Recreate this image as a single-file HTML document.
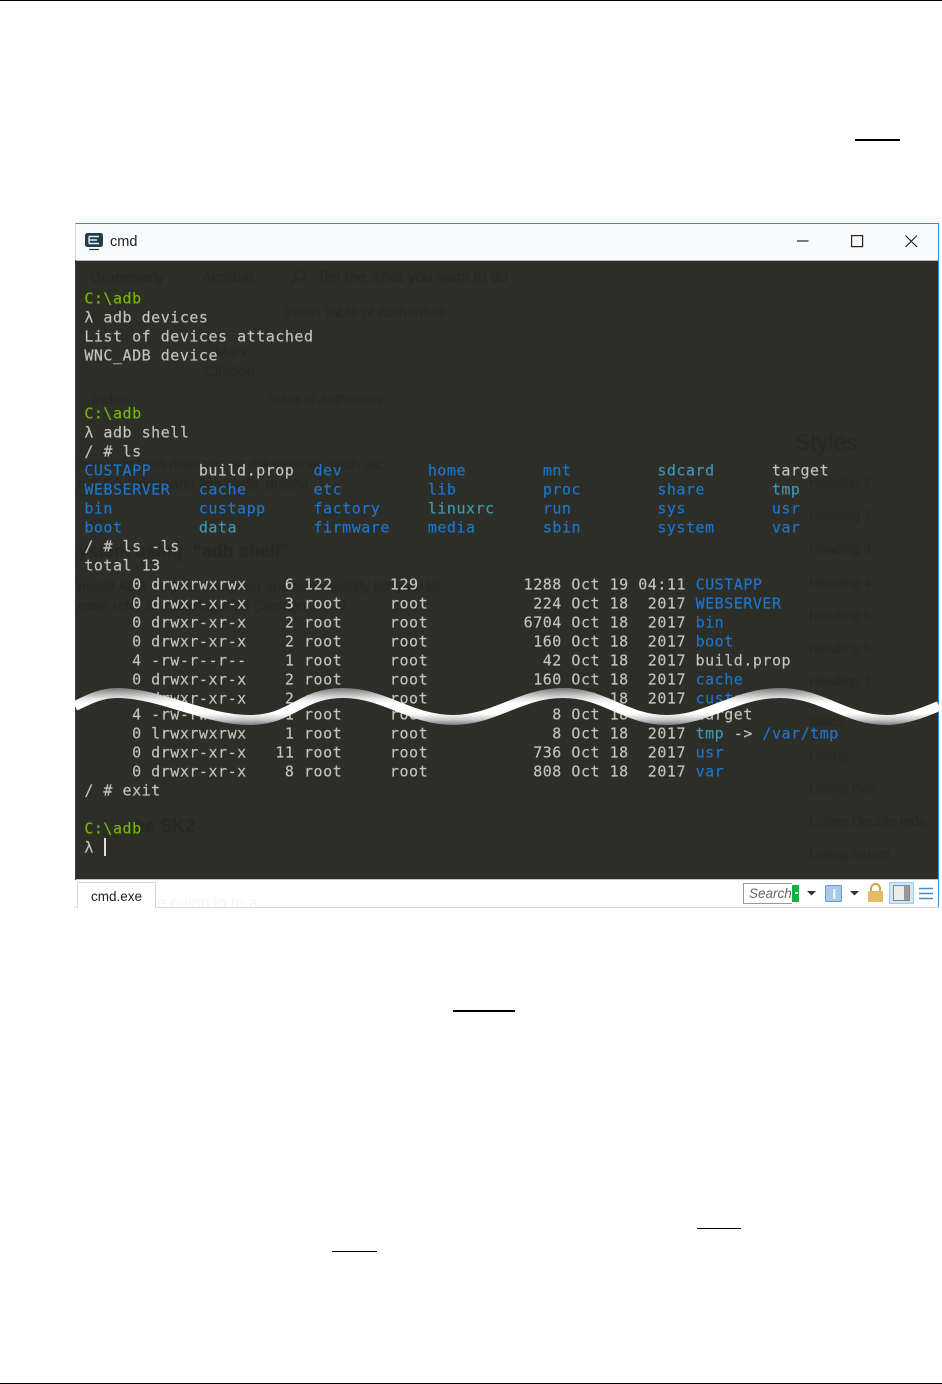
<!DOCTYPE html>
<html><head><meta charset="utf-8">
<style>
html,body{margin:0;padding:0;background:#fff}
#p{position:relative;width:942px;height:1384px;overflow:hidden;background:#fff}
.b{position:absolute;background:#000}
#win{position:absolute;left:75px;top:223px;width:864px;height:685px;background:#fff}
#title{position:absolute;left:0;top:0;width:864px;height:37px;background:#f9fafc;border-top:1px solid #3d8ccc;box-sizing:border-box;border-left:1px solid #cfdce8}
#term{position:absolute;left:0;top:37px;width:864px;height:620px;background:#2e2e28;border-top:1px solid #b8b8b8;box-sizing:border-box;overflow:hidden}
.layer{position:absolute;left:0;top:0;width:942px;height:1384px;filter:blur(.3px)}
.t{position:absolute;margin:0 0 0 -.2px;transform:translateY(.5px);font:15px/19px "DejaVu Sans Mono","Liberation Mono",monospace;letter-spacing:.52px;white-space:pre;color:#c4c4bc;-webkit-text-stroke:.15px currentColor}
.g{color:#76b900}.u{color:#1b77d0}.c{color:#4098b4}
.gh{position:absolute;font-family:"Liberation Sans",sans-serif;font-size:15px;line-height:16px;color:#272721;white-space:pre}
.h{font-size:13.6px}
</style></head><body><div id="p">
<div class="b" style="left:0;top:0;width:942px;height:1px"></div>
<div class="b" style="left:0;top:1383px;width:942px;height:1px"></div>
<div class="b" style="left:855px;top:139px;width:45px;height:2px"></div>
<div class="b" style="left:453px;top:1010px;width:62px;height:2px"></div>
<div class="b" style="left:697px;top:1228px;width:44px;height:1px"></div>
<div class="b" style="left:332px;top:1251px;width:45px;height:1px"></div>

<div id="win">
<div id="title"></div>
<div id="term"></div>
<div style="position:absolute;left:0;top:656px;width:864px;height:28px;background:#fff;border-top:1px solid #c4c4c4;box-sizing:border-box"></div>
<div style="position:absolute;left:0;top:684px;width:864px;height:1px;background:#d8d8d8"></div>
<div style="position:absolute;left:863px;top:0;width:1px;height:684px;background:#3d8ccc"></div>
<div style="position:absolute;left:0;top:37px;width:1px;height:620px;background:#3d3d38"></div>
</div>

<!-- title bar -->
<svg style="position:absolute;left:84px;top:232px" width="22" height="20" viewBox="0 0 22 20">
<rect x="1" y="1" width="18" height="14" rx="2.5" fill="#1d3f4a"/>
<path d="M5 4.5h10M5 8h8M5 11.5h10M5 4.5v7" stroke="#e8eef0" stroke-width="1.4" fill="none"/>
<path d="M5 17.5h10" stroke="#1d3f4a" stroke-width="1.2"/>
</svg>
<div style="position:absolute;left:110px;top:234px;font:14.5px/17px 'Liberation Sans',sans-serif;color:#222">cmd</div>
<svg style="position:absolute;left:790px;top:230px" width="135" height="22" viewBox="0 0 135 22" fill="none" stroke="#222" stroke-width="1.2">
<path d="M7 11h11.5"/>
<rect x="61.6" y="5.6" width="11" height="11"/>
<path d="M115.5 5.5l11.5 11.5M127 5.5l-11.5 11.5"/>
</svg>

<!-- ghost document -->
<div class="layer" style="filter:blur(.4px)">
<span class="gh" style="left:90px;top:270px">Grammarly</span>
<span class="gh" style="left:202px;top:270px">Acrobat</span>
<svg style="position:absolute;left:289px;top:268px" width="18" height="18" fill="none" stroke="#272721" stroke-width="1.4"><circle cx="11" cy="7" r="5"/><path d="M7 11l-5 5"/></svg>
<span class="gh" style="left:317px;top:270px;font-size:15.5px">Tell me what you want to do</span>
<span class="gh" style="left:284px;top:305px;font-size:14.4px">Insert Table of Authorities</span>
<span class="gh" style="left:215px;top:345px">Mark</span>
<span class="gh" style="left:204px;top:364px">Citation</span>
<span class="gh" style="left:92px;top:392px">Index</span>
<span class="gh" style="left:268px;top:392px;font-size:13.6px">Table of Authorities</span>
<span class="gh" style="left:795px;top:429px;font-size:23px;line-height:26px">Styles</span>
<span class="gh h" style="left:809px;top:475px">Heading 1</span>
<span class="gh h" style="left:809px;top:508px">Heading 2</span>
<span class="gh h" style="left:809px;top:541px">Heading 3</span>
<span class="gh h" style="left:809px;top:575px">Heading 4</span>
<span class="gh h" style="left:809px;top:608px">Heading 5</span>
<span class="gh h" style="left:809px;top:641px">Heading 6</span>
<span class="gh h" style="left:809px;top:674px">Heading 7</span>
<span class="gh h" style="left:809px;top:714px">Italics</span>
<span class="gh h" style="left:809px;top:748px">Listing</span>
<span class="gh h" style="left:809px;top:781px">Listing Box</span>
<span class="gh h" style="left:809px;top:814px">Listing Double-Inde</span>
<span class="gh h" style="left:809px;top:847px">Listing Indent</span>
<span class="gh" style="left:78px;top:457px;font-size:14.5px">manuals from manuals on the internet, such as:</span>
<span class="gh" style="left:78px;top:477px;font-size:14.5px">n 2.4.3 (command line / adb, droidvi</span>
<span class="gh" style="left:78px;top:542px;font-size:18px;font-weight:bold;line-height:18px">ystem using  “adb shell”</span>
<span class="gh" style="left:78px;top:579px;font-size:14.2px">Install ADB on your computer and successfully list your kit</span>
<span class="gh" style="left:78px;top:598px;font-size:14.2px">ease refer to Installing ADB (Section 2.4.3)</span>
<span class="gh" style="left:128px;top:817px;font-size:18px;font-weight:bold;line-height:18px">the SK2</span>
</div>
<span class="gh" style="left:150px;top:896px;font-size:16px;color:#f6f6f6;clip-path:inset(0 0 5px 0)">ile going in to a</span>

<!-- terminal upper -->
<div class="layer" style="clip-path:path('M75 260L939 260L939 706C925 712 905 720 887 720C845 720 822 693 780 693C735 693 708 720 667 720C625 720 605 693 563 693C520 693 495 720 453 720C410 720 385 693 343 693C300 693 292 720 250 720C205 720 160 693 117 693C100 693 88 700 75 706Z')">
<div class="t g" style="left:84.5px;top:289px">C:\adb</div>
<div class="t" style="left:84.5px;top:308px">λ adb devices</div>
<div class="t" style="left:84.5px;top:327px">List of devices attached</div>
<div class="t" style="left:84.5px;top:346px">WNC_ADB device</div>
<div class="t g" style="left:84.5px;top:404px">C:\adb</div>
<div class="t" style="left:84.5px;top:423px">λ adb shell</div>
<div class="t" style="left:84.5px;top:442px">/ # ls</div>
<div class="t u" style="left:84.5px;top:461px">CUSTAPP</div><div class="t" style="left:199px;top:461px">build.prop</div><div class="t u" style="left:313.7px;top:461px">dev</div><div class="t u" style="left:428px;top:461px">home</div><div class="t u" style="left:543px;top:461px">mnt</div><div class="t c" style="left:657.5px;top:461px">sdcard</div><div class="t" style="left:772px;top:461px">target</div>
<div class="t u" style="left:84.5px;top:480px">WEBSERVER</div><div class="t u" style="left:199px;top:480px">cache</div><div class="t u" style="left:313.7px;top:480px">etc</div><div class="t u" style="left:428px;top:480px">lib</div><div class="t u" style="left:543px;top:480px">proc</div><div class="t u" style="left:657.5px;top:480px">share</div><div class="t c" style="left:772px;top:480px">tmp</div>
<div class="t u" style="left:84.5px;top:499px">bin</div><div class="t u" style="left:199px;top:499px">custapp</div><div class="t u" style="left:313.7px;top:499px">factory</div><div class="t c" style="left:428px;top:499px">linuxrc</div><div class="t u" style="left:543px;top:499px">run</div><div class="t u" style="left:657.5px;top:499px">sys</div><div class="t u" style="left:772px;top:499px">usr</div>
<div class="t u" style="left:84.5px;top:518px">boot</div><div class="t c" style="left:199px;top:518px">data</div><div class="t u" style="left:313.7px;top:518px">firmware</div><div class="t u" style="left:428px;top:518px">media</div><div class="t u" style="left:543px;top:518px">sbin</div><div class="t u" style="left:657.5px;top:518px">system</div><div class="t u" style="left:772px;top:518px">var</div>
<div class="t" style="left:84.5px;top:537px">/ # ls -ls</div>
<div class="t" style="left:84.5px;top:556px">total 13</div>
<div class="t" style="left:84.5px;top:575px">     0 drwxrwxrwx    6 122      129           1288 Oct 19 04:11 <span class="u">CUSTAPP</span></div>
<div class="t" style="left:84.5px;top:594px">     0 drwxr-xr-x    3 root     root           224 Oct 18  2017 <span class="u">WEBSERVER</span></div>
<div class="t" style="left:84.5px;top:613px">     0 drwxr-xr-x    2 root     root          6704 Oct 18  2017 <span class="u">bin</span></div>
<div class="t" style="left:84.5px;top:632px">     0 drwxr-xr-x    2 root     root           160 Oct 18  2017 <span class="u">boot</span></div>
<div class="t" style="left:84.5px;top:651px">     4 -rw-r--r--    1 root     root            42 Oct 18  2017 build.prop</div>
<div class="t" style="left:84.5px;top:670px">     0 drwxr-xr-x    2 root     root           160 Oct 18  2017 <span class="u">cache</span></div>
<div class="t" style="left:84.5px;top:689px">     0 drwxr-xr-x    2 root     root           224 Oct 18  2017 <span class="u">custapp</span></div>
</div>

<!-- terminal lower -->
<div class="layer" style="clip-path:path('M75 879L939 879L939 706C925 712 905 720 887 720C845 720 822 693 780 693C735 693 708 720 667 720C625 720 605 693 563 693C520 693 495 720 453 720C410 720 385 693 343 693C300 693 292 720 250 720C205 720 160 693 117 693C100 693 88 700 75 706Z')">
<div class="t" style="left:84.5px;top:705px">     4 -rw-rwxrwx    1 root     root             8 Oct 18  2017 target</div>
<div class="t" style="left:84.5px;top:724px">     0 lrwxrwxrwx    1 root     root             8 Oct 18  2017 <span class="c">tmp</span> -&gt; <span class="u">/var/tmp</span></div>
<div class="t" style="left:84.5px;top:743px">     0 drwxr-xr-x   11 root     root           736 Oct 18  2017 <span class="u">usr</span></div>
<div class="t" style="left:84.5px;top:762px">     0 drwxr-xr-x    8 root     root           808 Oct 18  2017 <span class="u">var</span></div>
<div class="t" style="left:84.5px;top:781px">/ # exit</div>
<div class="t g" style="left:84.5px;top:819px">C:\adb</div>
<div class="t" style="left:84.5px;top:838px">λ</div>
<div style="position:absolute;left:104px;top:838px;width:2px;height:18px;background:#e0e0e0"></div>
</div>

<!-- wave -->
<svg style="position:absolute;left:0;top:0" width="942" height="800" viewBox="0 0 942 800" fill="none">
<defs><linearGradient id="w" gradientUnits="userSpaceOnUse" x1="0" y1="687" x2="0" y2="726">
<stop offset="0" stop-color="#6e6e6e"/><stop offset=".14" stop-color="#a8a8a8"/><stop offset=".3" stop-color="#e6e6e6"/><stop offset=".42" stop-color="#fff"/><stop offset=".68" stop-color="#fff"/><stop offset=".84" stop-color="#c8c8c8"/><stop offset="1" stop-color="#6e6e6e"/>
</linearGradient></defs>
<path d="M75 706C88 700 100 693 117 693C160 693 205 720 250 720C292 720 300 693 343 693C385 693 410 720 453 720C495 720 520 693 563 693C605 693 625 720 667 720C708 720 735 693 780 693C822 693 845 720 887 720C905 720 925 712 939 706" stroke="url(#w)" stroke-width="10"/>
</svg>

<!-- status bar -->
<div style="position:absolute;left:77px;top:882px;width:79px;height:26px;box-sizing:border-box;background:#fff;border:1px solid #d4d4d4;border-bottom:0;font:13.5px/27px 'Liberation Sans',sans-serif;color:#222;text-align:center">cmd.exe</div>
<div style="position:absolute;left:792px;top:885px;width:7px;height:17px;background:#12b13a"></div>
<div style="position:absolute;left:795px;top:892px;width:3px;height:2px;background:#d8f5d8"></div>
<div style="position:absolute;left:743px;top:883px;width:49px;height:21px;box-sizing:border-box;background:#fff;border:1px solid #9a9a9a;border-right:0;font:italic 13.5px/19px 'Liberation Sans',sans-serif;color:#666;padding-left:5px">Search</div>
<svg style="position:absolute;left:800px;top:878px" width="142" height="30" viewBox="800 878 142 30">
<path d="M807 891h9l-4.5 4.5z" fill="#333"/>
<path d="M850 891h9l-4.5 4.5z" fill="#333"/>
<rect x="825.5" y="885.5" width="16" height="16" rx="1" fill="#a9c9e8" stroke="#6a9ccc"/>
<rect x="833" y="889" width="2.4" height="10" fill="#e8f2fb"/>
<path d="M871 892v-3.5a4.5 4.5 0 0 1 9 0v3.5" fill="none" stroke="#c8a850" stroke-width="2"/>
<rect x="868" y="891" width="15" height="11" rx="1" fill="#e2bc62"/>
<rect x="889.5" y="882.5" width="24" height="21" fill="#cce8ff" stroke="#99d1ff"/>
<rect x="893.5" y="885.5" width="16" height="15" fill="#ececec" stroke="#888"/>
<rect x="904" y="886" width="5" height="14" fill="#999"/>
<path d="M919 888.5h14M919 893.5h14M919 898.5h14" stroke="#3f8fd0" stroke-width="1.6"/>
</svg>
</div></body></html>
